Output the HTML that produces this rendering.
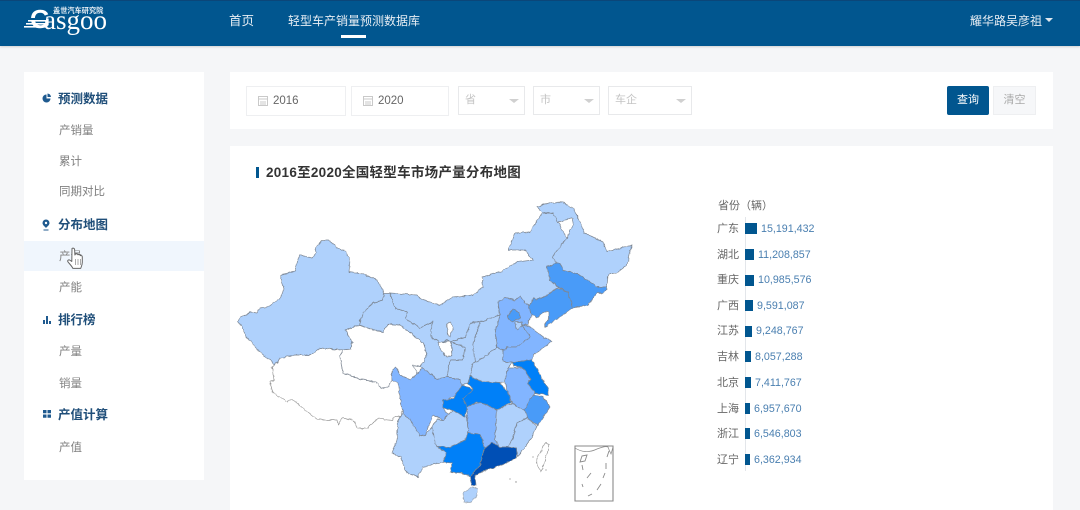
<!DOCTYPE html>
<html lang="zh-CN"><head><meta charset="utf-8"><title>Gasgoo</title>
<style>
html,body{margin:0;padding:0}
body{width:1080px;height:510px;position:relative;overflow:hidden;background:#f5f6f8;font-family:"Liberation Sans","Noto Sans CJK SC",sans-serif;color:#777}
.a{position:absolute;white-space:nowrap}
.hd{left:0;top:0;width:1080px;height:46px;background:#01568f;border-top:1px solid #0b4679;box-sizing:border-box;box-shadow:0 1px 2px rgba(0,0,0,.15)}
.card{background:#fff}
.nav{color:#e8eef4;font-size:12.5px;line-height:18px}
.sh{left:58px;font-size:12.5px;font-weight:bold;color:#1f4e79;line-height:16px}
.si{left:59px;font-size:11.5px;color:#808080;line-height:16px}
.ipt{background:#fff;border:1px solid #eeeff1;box-sizing:border-box;height:30px;top:86px;font-size:11.5px;color:#666;line-height:28px}
.sel{background:#fff;border:1px solid #e8e9eb;box-sizing:border-box;height:29px;top:86px;font-size:11px;color:#c4c4c4;line-height:27px;padding-left:6px}
.sel:after{content:"";position:absolute;right:5px;top:12px;border:5px solid transparent;border-top:4px solid #d0d0d0;border-bottom:0}
.lb{left:717px;font-size:11px;color:#666;line-height:14px}
.bar{left:745px;height:11px;background:#01568f}
.v{font-size:10.700px;color:#4a7fb0;line-height:14px}
svg{position:absolute;left:0;top:0;overflow:visible}
</style></head><body>

<div class="a hd"></div>
<div class="a" style="left:30px;top:4px;font:bold 26px/30px 'Liberation Sans',sans-serif;color:#fff">G</div>
<svg width="60" height="40"><g fill="#01568f"><rect x="24" y="18" width="22" height="2.500"/></g><g fill="#fff"><rect x="28" y="20" width="20" height="1.600"/><rect x="26" y="23" width="20" height="1.600"/><rect x="24" y="26" width="22" height="1.600"/></g></svg>
<div class="a" style="left:44px;top:3px;font:27px/34px 'Liberation Serif',serif;color:#fff">asgoo</div>
<div class="a" style="left:53px;top:6px;font-size:7.200px;line-height:10px;color:#e5edf4;font-weight:bold">盖世汽车研究院</div>
<div class="a nav" style="left:229px;top:12px">首页</div>
<div class="a nav" style="left:288px;top:12px;font-size:12px">轻型车产销量预测数据库</div>
<div class="a" style="left:341px;top:35px;width:25px;height:3px;background:#fff"></div>
<div class="a nav" style="left:970px;top:12px;font-size:12px">耀华路吴彦祖</div>
<div class="a" style="left:1045px;top:18px;border:4px solid transparent;border-top:4px solid #dfe7ee;border-bottom:0"></div>

<div class="a card" style="left:24px;top:72px;width:180px;height:408px"></div>
<div class="a" style="left:24px;top:241px;width:180px;height:30px;background:#f0f6fd"></div>
<svg width="204" height="480">
<path d="M46.500 94.500a4 4 0 1 0 4 4h-4z" fill="#1f5a8f"/><path d="M47.500 93.500a4 4 0 0 1 3.500 3.500h-3.500z" fill="#1f5a8f"/>
<path d="M46 219.500a3.500 3.500 0 0 1 3.500 3.500c0 2-2.200 3.500-3.500 5-1.300-1.500-3.500-3-3.500-5a3.500 3.500 0 0 1 3.500-3.500z" fill="#1f5a8f"/><circle cx="46" cy="223" r="1.200" fill="#fff"/><rect x="43.500" y="229.500" width="5" height="1" fill="#1f5a8f"/>
<path d="M43 324h2v-4h-2zM46 324h2v-8h-2zM49 324h2v-3h-2z" fill="#1f5a8f"/>
<path d="M43 410h3.500v3.300H43zM47.500 410H51v3.300h-3.500zM43 414.500h3.500v3.300H43zM47.500 414.500H51v3.300h-3.500z" fill="#1f5a8f"/>
</svg>
<div class="a sh" style="top:91px">预测数据</div>
<div class="a si" style="top:123px">产销量</div>
<div class="a si" style="top:154px">累计</div>
<div class="a si" style="top:184px">同期对比</div>
<div class="a sh" style="top:217px">分布地图</div>
<div class="a si" style="top:249px">产量</div>
<div class="a si" style="top:280px">产能</div>
<div class="a sh" style="top:312px">排行榜</div>
<div class="a si" style="top:344px">产量</div>
<div class="a si" style="top:376px">销量</div>
<div class="a sh" style="top:407px">产值计算</div>
<div class="a si" style="top:440px">产值</div>
<svg width="100" height="280"><path d="M72 248.500c1-.8 2.500-.2 2.600 1l.3 5.500.6-1c1.100-.5 2.200 0 2.400.8 1.100-.6 2.200-.2 2.400.8 1-.4 2 .1 2 1.300v5.500c0 2.500-1.100 4.500-1.600 6h-7.800c-1-2.200-2.700-3.800-4.900-6.500-.8-1 .2-2.500 1.600-1.900l2.200 1.500z" fill="#fff" stroke="#666" stroke-width="1" stroke-linejoin="round"/><path d="M75.500 259v6M78 259v6M80.400 259v6" stroke="#888" stroke-width=".7" fill="none"/></svg>

<div class="a card" style="left:230px;top:72px;width:823px;height:57px"></div>
<div class="a ipt" style="left:246px;width:100px;padding-left:26px">2016</div>
<div class="a ipt" style="left:351px;width:98px;padding-left:26px">2020</div>
<svg width="400" height="120"><g fill="none" stroke="#c9c9c9" stroke-width="1"><rect x="258.500" y="96.500" width="9" height="9"/><path d="M258.500 99h9M260 102h6M260 104h6"/><rect x="363.500" y="96.500" width="9" height="9"/><path d="M363.500 99h9M365 102h6M365 104h6"/></g></svg>
<div class="a sel" style="left:458px;width:67px">省</div>
<div class="a sel" style="left:533px;width:67px">市</div>
<div class="a sel" style="left:608px;width:84px">车企</div>
<div class="a" style="left:947px;top:86px;width:42px;height:29px;background:#01568f;border-radius:2px;color:#fff;font-size:11px;line-height:29px;text-align:center">查询</div>
<div class="a" style="left:993px;top:86px;width:43px;height:29px;box-sizing:border-box;background:#f6f7f9;border:1px solid #eeeff1;color:#aaa;font-size:11px;line-height:27px;text-align:center">清空</div>

<div class="a card" style="left:230px;top:146px;width:823px;height:364px"></div>
<div class="a" style="left:256px;top:167px;width:3px;height:11px;background:#01568f"></div>
<div class="a" style="left:266px;top:163px;font-size:13.500px;font-weight:bold;color:#333;line-height:20px;letter-spacing:.27px">2016至2020全国轻型车市场产量分布地图</div>

<svg width="640" height="510"><defs><filter id="w" x="220" y="190" width="420" height="320" filterUnits="userSpaceOnUse"><feTurbulence type="fractalNoise" baseFrequency=".22" numOctaves="2" seed="4" result="n"/><feDisplacementMap in="SourceGraphic" in2="n" scale="3" xChannelSelector="R" yChannelSelector="G"/><feGaussianBlur stdDeviation=".3"/></filter></defs>
<g filter="url(#w)" stroke="#7d8794" stroke-width=".7" stroke-linejoin="round">
<path fill="#fff" stroke="#999" d="M275 365L272 367L274 380L270 382L273 393L287 402L292 399L303 408L318 420L337 420L338 425L342 418L353 420L358 428L368 428L378 418L392 420L395 416L400 417L402 410L398 383L392 380L388 387L382 388L375 382L360 379L343 373L340 357L342 350L320 348L310 355L295 355L280 358Z"/>
<path fill="#fff" d="M359 325L373 330L383 332L388 324L400 325L423 343L427 355L420 367L413 365L417 372L415 377L410 380L400 375L396 367L392 370L392 380L388 387L382 388L375 382L360 379L343 373L340 357L342 350L351 349L352 342L345 330Z"/>
<path fill="#afd1fc" d="M238 322L240 317L251 312L257 313L260 308L267 307L280 299L284 289L280 275L295 271L299 255L312 258L316 253L316 247L323 240L329 240L337 248L345 251L350 260L349 272L363 274L377 280L384 293L383 300L373 303L363 313L359 325L345 330L352 342L351 349L342 350L320 348L310 355L295 355L280 358L275 365L260 352L245 335L242 327Z"/>
<path fill="#afd1fc" d="M384 293L390 293L395 308L407 312L405 318L420 328L433 322L430 335L440 343L447 340L450 342L465 347L463 360L450 360L447 377L437 379L423 368L420 367L427 355L423 343L400 325L388 324L383 332L373 330L359 325L363 313L373 303L383 300Z"/>
<path fill="#afd1fc" d="M390 293L417 295L423 300L440 305L453 297L473 295L483 287L482 277L500 272L517 262L533 260L525 250L508 250L515 233L530 232L542 213L553 213L558 222L567 238L552 257L557 263L547 267L550 280L558 287L547 295L537 300L533 298L529 307L520 296L515 300L505 298L498 302L500 315L480 322L473 322L470 325L465 337L450 342L447 340L440 343L430 335L433 322L420 328L405 318L407 312L395 308Z"/>
<path fill="#afd1fc" d="M537 207L547 203L562 202L573 208L585 233L603 242L607 252L632 245L627 265L617 273L608 275L607 287L597 287L590 282L580 275L563 270L560 263L557 263L552 257L567 238L573 225L573 218L558 222L553 213L542 213Z"/>
<path fill="#4a9bf8" d="M547 267L557 263L560 263L563 270L580 275L590 282L597 287L607 287L607 290L602 293L597 293L588 305L573 308L568 292L558 287L550 280Z"/>
<path fill="#4a9bf8" d="M558 288L568 292L573 308L545 327L544 325L549 318L549 312L543 312L537 318L530 313L529 307L533 298L537 300L547 295Z"/>
<path fill="#82b5ff" d="M498 302L505 298L515 300L520 296L529 307L530 313L532 315L527 325L522 325L530 337L517 347L507 347L505 350L497 348L495 333L500 315Z"/>
<path fill="#4a9bf8" d="M507 317L513 309L519 312L520 318L512 322Z"/>
<path fill="#afd1fc" d="M515 322L522 322L522 326L518 330L515 328Z"/>
<path fill="#afd1fc" d="M480 322L500 315L495 333L497 348L475 363L473 345Z"/>
<path fill="#afd1fc" d="M470 325L473 322L480 322L473 345L475 363L473 363L470 376L468 383L462 385L460 379L447 377L450 360L463 360L465 347L450 342L465 337Z"/>
<path fill="#fff" d="M447 323L451 322L453 330L450 337L447 333Z M438 343L450 341L453 350L451 356L447 357L441 350Z"/>
<path fill="#82b5ff" d="M505 350L507 347L517 347L530 337L522 325L530 327L543 337L552 341L545 347L533 355L532 360L513 362L503 362L503 350Z"/>
<path fill="#afd1fc" d="M473 363L475 363L497 348L503 350L503 362L513 362L508 368L505 382L500 383L483 382L470 376Z"/>
<path fill="#82b5ff" d="M508 368L523 368L531 379L527 383L535 393L530 400L526 412L512 403L508 392L505 382Z"/>
<path fill="#0080f8" d="M513 362L532 360L542 378L548 388L548 395L535 393L527 383L531 379L523 368L513 366Z"/>
<path fill="#4a9bf8" d="M533 395L543 397L550 407L538 425L527 418L524 410L530 400Z"/>
<path fill="#82b5ff" d="M392 380L392 370L396 367L400 375L410 380L423 368L437 379L447 377L460 379L462 385L460 393L443 402L443 408L448 415L443 420L433 415L425 435L420 436L410 420L403 415L402 410L398 383Z"/>
<path fill="#0080f8" d="M443 400L453 399L462 385L473 390L463 398L467 407L465 417L453 410L443 408Z"/>
<path fill="#0080f8" d="M468 383L470 376L483 382L500 383L508 392L511 402L497 410L483 403L477 402L467 407L463 398L473 390Z"/>
<path fill="#afd1fc" d="M398 420L403 413L410 420L420 436L425 435L432 427L437 440L437 447L447 453L443 462L423 467L418 477L407 473L400 457L392 453L397 440Z"/>
<path fill="#afd1fc" d="M432 427L437 420L443 420L448 415L453 410L465 417L467 415L468 433L472 435L465 440L450 447L437 447L434 440Z"/>
<path fill="#82b5ff" d="M467 407L480 402L497 410L495 440L499 447L492 442L485 448L480 434L468 433Z"/>
<path fill="#afd1fc" d="M497 410L512 403L526 412L527 418L517 423L512 440L508 447L499 447L495 440Z"/>
<path fill="#afd1fc" d="M527 418L537 426L532 437L518 457L516 448L508 447L512 440L517 423Z"/>
<path fill="#0080f8" d="M437 447L450 447L465 440L468 433L480 434L485 448L480 465L470 477L462 473L450 472L452 463L443 462L447 453Z"/>
<path fill="#004fb5" d="M485 448L492 442L499 447L508 447L516 448L517 458L503 465L487 470L475 475L476 485L471 485L470 477L480 465Z"/>
<path fill="#afd1fc" d="M463 493L473 487L478 488L477 495L470 503L464 502Z" stroke="#9fa9b5"/>
<path fill="#fff" stroke="#999" d="M540 453L545 443L549 444L547 455L541 472L536 462Z"/>
</g>
<g fill="none" stroke="#8a8a8a" stroke-width=".9" style="filter:blur(.3px)">
<path stroke-width="1.100" d="M575 446H613V501H575Z"/>
<path stroke-width=".7" d="M575 448c6 4 14 5 22 1 5-2 9-3 11-2 1 3 2 5 3 7l2-7"/>
<path d="M582 456l5-1-2 6-5 1zM582 465l1 5M591 473l-4 5M606 463v6M605 473l-2 5M582 484l1 3M601 484l-4 6M592 494l-4 2M609 451l-2 6"/>
</g>
<g fill="#8a8a8a"><circle cx="510" cy="479" r=".6"/><circle cx="516" cy="482" r=".7"/><circle cx="533" cy="457" r=".6"/><circle cx="546" cy="470" r=".6"/></g></svg>

<div class="a" style="left:718px;top:199px;font-size:11px;color:#666;line-height:14px">省份（辆）</div>
<div class="a" style="left:745px;top:217px;width:1px;height:254px;background:#e3e6ea"></div>
<div class="a lb" style="top:222px">广东</div><div class="a bar" style="top:223px;width:12px"></div><div class="a v" style="left:761px;top:222px">15,191,432</div>
<div class="a lb" style="top:248px">湖北</div><div class="a bar" style="top:249px;width:9px"></div><div class="a v" style="left:758px;top:248px">11,208,857</div>
<div class="a lb" style="top:273px">重庆</div><div class="a bar" style="top:275px;width:9px"></div><div class="a v" style="left:758px;top:273px">10,985,576</div>
<div class="a lb" style="top:299px">广西</div><div class="a bar" style="top:300px;width:8px"></div><div class="a v" style="left:757px;top:299px">9,591,087</div>
<div class="a lb" style="top:324px">江苏</div><div class="a bar" style="top:326px;width:7px"></div><div class="a v" style="left:756px;top:324px">9,248,767</div>
<div class="a lb" style="top:350px">吉林</div><div class="a bar" style="top:351px;width:6px"></div><div class="a v" style="left:755px;top:350px">8,057,288</div>
<div class="a lb" style="top:376px">北京</div><div class="a bar" style="top:377px;width:6px"></div><div class="a v" style="left:755px;top:376px">7,411,767</div>
<div class="a lb" style="top:402px">上海</div><div class="a bar" style="top:403px;width:5px"></div><div class="a v" style="left:754px;top:402px">6,957,670</div>
<div class="a lb" style="top:427px">浙江</div><div class="a bar" style="top:428px;width:5px"></div><div class="a v" style="left:754px;top:427px">6,546,803</div>
<div class="a lb" style="top:453px">辽宁</div><div class="a bar" style="top:454px;width:5px"></div><div class="a v" style="left:754px;top:453px">6,362,934</div>
</body></html>
